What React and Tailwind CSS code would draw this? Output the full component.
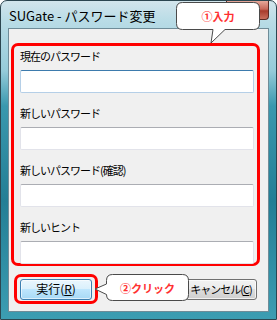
const Field = ({ label, focused }) => (
  <div className="flex flex-col">
    <div className="h-[14px] leading-[14px] text-[11px] tracking-[-1px] text-black">{label}</div>
    <div
      className={
        focused
          ? 'mt-[7px] h-[23px] w-[234px] rounded-[2px] border border-[#b5cfe7] border-t-[#3d7bad] bg-white'
          : 'mt-[7px] h-[23px] w-[234px] rounded-[2px] border border-[#e2e3ea] border-t-[#abadb3] bg-white'
      }
    />
  </div>
)

export default function App() {
  return (
    <div className="relative w-[277px] h-[320px] bg-white font-['Noto_Sans_CJK_JP',sans-serif]">
      {/* window frame */}
      <div className="h-full flex flex-col rounded-t-[7px] border border-[#2c4650] px-[7px] pb-[7px] bg-[linear-gradient(180deg,#d2e5ec_0px,#b9dce6_20px,#95cbd9_70px,#3a98ae_105px,#237e95_200px,#3c9db2_100%)]">
        <div className="h-[27px] flex items-start">
          <span className="mt-[7px] ml-[1px] text-[13px] leading-[16px] text-black">SUGate - パスワード変更</span>
          <div className="ml-auto w-[43px] h-[19px] rounded-b-[4px] border border-t-0 border-[#5a2a24] bg-[linear-gradient(180deg,#e6a89a_0%,#c7685a_45%,#a83b2c_55%,#c9705e_100%)]" />
        </div>

        {/* dialog body */}
        <div className="flex-1 flex flex-col border border-[#6f8c98] bg-[#f0f0f0]">
          <div className="mt-[14px] ml-[2px] w-[249px] h-[223px] rounded-[7px] border-[3px] border-[#ff0000] px-[6px] pt-[3px] flex flex-col gap-[13px]">
            <Field label="現在のパスワード" focused />
            <Field label="新しいパスワード" />
            <Field label="新しいパスワード(確認)" />
            <Field label="新しいヒント" />
          </div>

          {/* buttons */}
          <div className="mt-[8px] ml-[5px] flex items-center">
            <div className="w-[84px] h-[30px] rounded-[7px] border-[3px] border-[#ff0000] flex items-center justify-center">
              <div className="w-[72px] h-[21px] rounded-[3px] border border-[#3c7fb1] bg-[linear-gradient(180deg,#eaf6fd_0%,#d9f0fc_50%,#bee6fd_50%,#a7d9f5_100%)] shadow-[inset_0_0_0_1px_rgba(255,255,255,0.6)] flex items-center justify-center text-[12px] leading-[14px] text-black">
                実行(<span className="underline">R</span>)
              </div>
            </div>
            <div className="ml-[87px] w-[72px] h-[21px] rounded-[3px] border border-[#707070] bg-[linear-gradient(180deg,#f2f2f2_0%,#ebebeb_50%,#dddddd_50%,#cfcfcf_100%)] shadow-[inset_0_0_0_1px_rgba(255,255,255,0.7)] flex items-center justify-center whitespace-nowrap text-[11px] leading-[14px] tracking-[-1px] text-black">
              キャンセル(<span className="underline">C</span>)
            </div>
          </div>
        </div>
      </div>

      {/* annotation callouts */}
      <svg className="absolute left-0 top-0 pointer-events-none" width="277" height="320" viewBox="0 0 277 320">
        <path
          d="M182.5 2.5 H253.5 Q259.5 2.5 259.5 8.5 V23.5 Q259.5 29.5 253.5 29.5 H225 L211 43 L213 29.5 H182.5 Q176.5 29.5 176.5 23.5 V8.5 Q176.5 2.5 182.5 2.5 Z"
          fill="#ffffff"
          stroke="#4a4a4a"
          strokeWidth="1"
        />
        <path
          d="M112.5 274.5 H182.5 Q188.5 274.5 188.5 280.5 V294.5 Q188.5 300.5 182.5 300.5 H112.5 Q106.5 300.5 106.5 294.5 L95 289 L106.5 284 V280.5 Q106.5 274.5 112.5 274.5 Z"
          fill="#ffffff"
          stroke="#4a4a4a"
          strokeWidth="1"
        />
      </svg>
      <div className="absolute left-[176px] top-[2px] w-[84px] h-[28px] flex items-center justify-center text-[11px] font-bold leading-[14px] text-[#ff3030]">
        ①入力
      </div>
      <div className="absolute left-[106px] top-[274px] w-[83px] h-[27px] flex items-center justify-center text-[11px] font-bold leading-[14px] text-[#ff3030]">
        ②クリック
      </div>
    </div>
  )
}
